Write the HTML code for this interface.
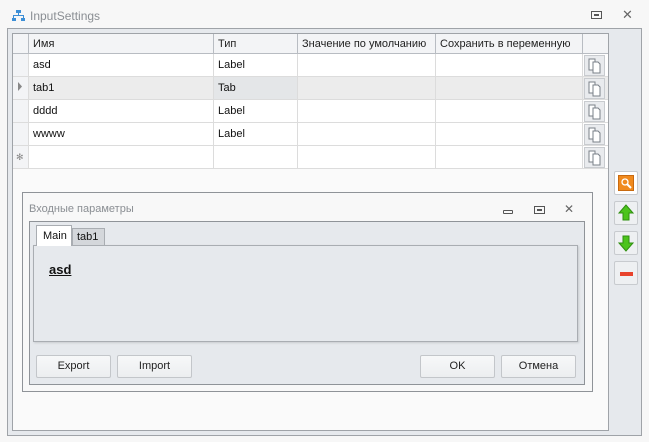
<!DOCTYPE html>
<html><head><meta charset="utf-8"><style>
*{box-sizing:border-box;margin:0;padding:0}
body{width:649px;height:442px;background:#f7f7f7;font-family:"Liberation Sans",sans-serif;font-size:11px;color:#111;position:relative;overflow:hidden}
.a{position:absolute}
.cell{position:absolute;border-right:1px solid #dcdcdc;border-bottom:1px solid #dcdcdc;padding-left:4px;line-height:22px;white-space:nowrap;overflow:hidden}
.hd{background:#f3f4f6;border-right:1px solid #b8bcc2;border-bottom:1px solid #b8bcc2;line-height:20px;color:#222}
.btn{position:absolute;border:1px solid #c3c6ca;border-radius:2px;background:linear-gradient(#f7f8f9,#eceef0);text-align:center;line-height:21px;color:#222}
.cp{position:absolute;left:584px;width:21px;height:21px;border:1px solid #c8cbcf;background:#e9ebee}
.rb{position:absolute;left:614px;width:24px;height:24px;border:1px solid #c8cbcf;border-radius:2px;background:#eef0f2}
</style></head><body>
<svg class="a" style="left:12px;top:10px" width="13" height="12"><g fill="#3d8fd6"><rect x="4" y="0" width="5" height="3"/><rect x="6" y="3" width="1" height="3"/><rect x="1" y="5" width="11" height="1"/><rect x="1" y="5" width="1" height="3"/><rect x="11" y="5" width="1" height="3"/><rect x="0" y="8" width="4" height="3"/><rect x="9" y="8" width="4" height="3"/></g></svg>
<div class="a" style="left:30px;top:9px;color:#8a8e93;font-size:12px">InputSettings</div>
<svg class="a" style="left:591px;top:11px" width="12" height="9"><rect x="0.5" y="0.5" width="10" height="7" fill="none" stroke="#555"/><rect x="3" y="3" width="5" height="2" fill="#555"/></svg>
<div class="a" style="left:622px;top:7px;font-size:13px;color:#666">✕</div>
<div class="a" style="left:7px;top:28px;width:635px;height:408px;border:1px solid #9fa3a8;background:#e6e9ed"></div>
<div class="a" style="left:12px;top:33px;width:597px;height:398px;border:1px solid #9fa3a8;background:#fafafa"></div>
<div class="cell hd" style="left:13px;top:34px;width:16px;height:20px"></div>
<div class="cell hd" style="left:29px;top:34px;width:185px;height:20px">Имя</div>
<div class="cell hd" style="left:214px;top:34px;width:84px;height:20px">Тип</div>
<div class="cell hd" style="left:298px;top:34px;width:138px;height:20px">Значение по умолчанию</div>
<div class="cell hd" style="left:436px;top:34px;width:147px;height:20px">Сохранить в переменную</div>
<div class="cell hd" style="left:583px;top:34px;width:25px;height:20px;border-right:none"></div>
<div class="a" style="left:13px;top:54px;width:595px;height:115px;background:#fff"></div>
<div class="a" style="left:29px;top:77px;width:579px;height:23px;background:#ececec"></div>
<div class="a" style="left:214px;top:77px;width:84px;height:23px;background:#e4e6e8"></div>
<div class="cell" style="left:13px;top:54px;width:16px;height:23px;background:#f3f4f6"></div>
<div class="cell" style="left:13px;top:77px;width:16px;height:23px;background:#f3f4f6"><svg width="6" height="9" style="margin-left:1px"><path d="M0 0L4 4.5L0 9Z" fill="#888"/></svg></div>
<div class="cell" style="left:13px;top:100px;width:16px;height:23px;background:#f3f4f6"></div>
<div class="cell" style="left:13px;top:123px;width:16px;height:23px;background:#f3f4f6"></div>
<div class="cell" style="left:13px;top:146px;width:16px;height:23px;background:#f3f4f6;color:#888;font-size:9px;padding-left:3px">✻</div>
<div class="cell" style="left:29px;top:54px;width:185px;height:23px">asd</div>
<div class="cell" style="left:29px;top:77px;width:185px;height:23px">tab1</div>
<div class="cell" style="left:29px;top:100px;width:185px;height:23px">dddd</div>
<div class="cell" style="left:29px;top:123px;width:185px;height:23px">wwww</div>
<div class="cell" style="left:29px;top:146px;width:185px;height:23px"></div>
<div class="cell" style="left:214px;top:54px;width:84px;height:23px">Label</div>
<div class="cell" style="left:214px;top:77px;width:84px;height:23px">Tab</div>
<div class="cell" style="left:214px;top:100px;width:84px;height:23px">Label</div>
<div class="cell" style="left:214px;top:123px;width:84px;height:23px">Label</div>
<div class="cell" style="left:214px;top:146px;width:84px;height:23px"></div>
<div class="cell" style="left:298px;top:54px;width:138px;height:115px;border-bottom:none"></div>
<div class="cell" style="left:436px;top:54px;width:147px;height:115px;border-bottom:none"></div>
<div class="a" style="left:298px;top:76px;width:310px;border-top:1px solid #dcdcdc"></div>
<div class="a" style="left:298px;top:99px;width:310px;border-top:1px solid #dcdcdc"></div>
<div class="a" style="left:298px;top:122px;width:310px;border-top:1px solid #dcdcdc"></div>
<div class="a" style="left:298px;top:145px;width:310px;border-top:1px solid #dcdcdc"></div>
<div class="a" style="left:298px;top:168px;width:310px;border-top:1px solid #dcdcdc"></div>
<div class="cp" style="top:55px"><svg width="19" height="19"><path d="M4 3h6v11H4z" fill="#fff" stroke="#7a8088"/><path d="M8 6h5l2 2v9H8z" fill="#fff" stroke="#7a8088"/></svg></div>
<div class="cp" style="top:78px"><svg width="19" height="19"><path d="M4 3h6v11H4z" fill="#fff" stroke="#7a8088"/><path d="M8 6h5l2 2v9H8z" fill="#fff" stroke="#7a8088"/></svg></div>
<div class="cp" style="top:101px"><svg width="19" height="19"><path d="M4 3h6v11H4z" fill="#fff" stroke="#7a8088"/><path d="M8 6h5l2 2v9H8z" fill="#fff" stroke="#7a8088"/></svg></div>
<div class="cp" style="top:124px"><svg width="19" height="19"><path d="M4 3h6v11H4z" fill="#fff" stroke="#7a8088"/><path d="M8 6h5l2 2v9H8z" fill="#fff" stroke="#7a8088"/></svg></div>
<div class="cp" style="top:147px"><svg width="19" height="19"><path d="M4 3h6v11H4z" fill="#fff" stroke="#7a8088"/><path d="M8 6h5l2 2v9H8z" fill="#fff" stroke="#7a8088"/></svg></div>
<div class="rb" style="top:171px;background:#fff"><div class="a" style="left:3px;top:3px;width:16px;height:16px;background:#f08a1e;border:1px solid #c86a10"><svg width="14" height="14"><circle cx="6" cy="6" r="3" fill="none" stroke="#fff" stroke-width="1.3"/><path d="M8 8l4 4" stroke="#fff" stroke-width="2"/></svg></div></div>
<div class="rb" style="top:201px"><svg width="22" height="22"><path d="M11 3L4 11h4v7h6v-7h4z" fill="#4cc41c" stroke="#2f8f10"/></svg></div>
<div class="rb" style="top:231px"><svg width="22" height="22"><path d="M11 19L4 11h4V4h6v7h4z" fill="#4cc41c" stroke="#2f8f10"/></svg></div>
<div class="rb" style="top:261px"><div class="a" style="left:5px;top:10px;width:13px;height:4px;background:#e8432c"></div></div>
<div class="a" style="left:22px;top:192px;width:571px;height:200px;border:1px solid #8f9398;background:#f8f8f8"></div>
<div class="a" style="left:29px;top:203px;color:#8a8e93;font-size:11px">Входные параметры</div>
<div class="a" style="left:503px;top:210px;width:10px;height:4px;border:1px solid #555;border-radius:1px"></div>
<svg class="a" style="left:534px;top:206px" width="12" height="9"><rect x="0.5" y="0.5" width="10" height="7" fill="none" stroke="#555"/><rect x="3" y="3" width="5" height="2" fill="#555"/></svg>
<div class="a" style="left:564px;top:202px;font-size:12px;color:#666">✕</div>
<div class="a" style="left:29px;top:221px;width:556px;height:164px;border:1px solid #8f9398;background:#e6e9ed"></div>
<div class="a" style="left:33px;top:245px;width:545px;height:97px;border:1px solid #a9adb2;background:#e6e9ed;box-shadow:1px 1px 2px #c8cbcf"></div>
<div class="a" style="left:36px;top:225px;width:36px;height:21px;border:1px solid #a9adb2;border-bottom:none;background:#fff;padding:4px 0 0 6px">Main</div>
<div class="a" style="left:72px;top:228px;width:33px;height:17px;border:1px solid #a9adb2;border-bottom:none;background:#d4d7db;padding:2px 0 0 4px">tab1</div>
<div class="a" style="left:49px;top:262px;font-weight:bold;text-decoration:underline;font-size:13px">asd</div>
<div class="btn" style="left:36px;top:355px;width:75px;height:23px">Export</div>
<div class="btn" style="left:117px;top:355px;width:75px;height:23px">Import</div>
<div class="btn" style="left:420px;top:355px;width:75px;height:23px">OK</div>
<div class="btn" style="left:501px;top:355px;width:75px;height:23px">Отмена</div>
</body></html>
